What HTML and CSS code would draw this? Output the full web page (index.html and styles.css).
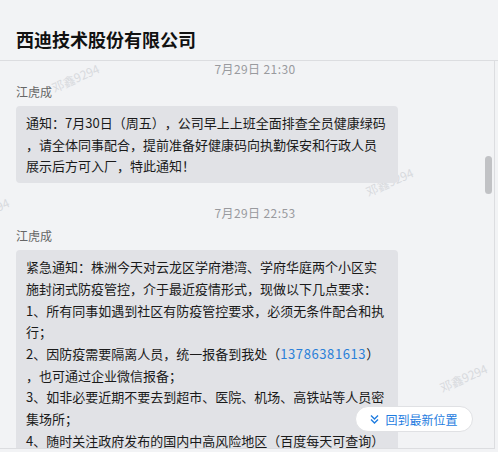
FILE: index.html
```html
<!DOCTYPE html>
<html lang="zh-CN">
<head>
    <meta charset="UTF-8">
    <meta name="viewport" content="width=device-width, initial-scale=1.0">
    <title>西迪技术股份有限公司</title>
    <link rel="stylesheet" href="styles.css">
</head>
<body>
    <div class="header">
        <h1>西迪技术股份有限公司</h1>
    </div>

    <div class="chat">
        <span class="watermark wm1">邓鑫9294</span>
        <span class="watermark wm2">邓鑫9294</span>
        <span class="watermark wm3">邓鑫9294</span>
        <span class="watermark wm4">邓鑫9294</span>

        <div class="msg">
            <div class="time">7月29日 21:30</div>
            <div class="name">江虎成</div>
            <div class="bubble">通知：7月30日（周五），公司早上上班全面排查全员健康绿码，请全体同事配合，提前准备好健康码向执勤保安和行政人员展示后方可入厂，特此通知！</div>
        </div>

        <div class="msg">
            <div class="time">7月29日 22:53</div>
            <div class="name">江虎成</div>
            <div class="bubble">紧急通知：株洲今天对云龙区学府港湾、学府华庭两个小区实施封闭式防疫管控，介于最近疫情形式，现做以下几点要求：<br>1、所有同事如遇到社区有防疫管控要求，必须无条件配合和执行；<br>2、因防疫需要隔离人员，统一报备到我处（<a href="tel:13786381613">13786381613</a>），也可通过企业微信报备；<br>3、如非必要近期不要去到超市、医院、机场、高铁站等人员密集场所；<br>4、随时关注政府发布的国内中高风险地区（百度每天可查询），如有途经或接触请及时报备。</div>
        </div>

        <div class="scroll-thumb"></div>

        <button class="to-latest">
            <svg width="9" height="10" viewBox="0 0 9 10">
                <path d="M1 1.5 L4.5 5 L8 1.5 M1 5.5 L4.5 9 L8 5.5" fill="none" stroke="#1e7ce0" stroke-width="1.4"/>
            </svg>
            回到最新位置
        </button>
    </div>
</body>
</html>
```

FILE: styles.css
```css
body {
    font-family: "Noto Sans CJK SC", "Noto Sans", sans-serif;
    background-color: #f2f3f5;
    margin: 0;
    padding: 0;
    color: #1a1a1a;
}
.header {
    height: 61px;
    border-bottom: 1px solid #dcdde0;
    padding: 27px 16px 0;
    box-sizing: border-box;
}
.header h1 {
    margin: 0;
    font-size: 18px;
    line-height: 24px;
    font-weight: bold;
    color: #111;
}
.chat {
    position: relative;
    width: 495px;
    height: 388px;
    overflow: hidden;
    border-right: 1px solid #dcdde0;
    border-bottom: 1px solid #dcdde0;
    box-sizing: border-box;
    padding: 0 16px;
}
.msg {
    margin-bottom: 22px;
}
.time {
    text-align: center;
    font-size: 12px;
    line-height: 16px;
    letter-spacing: 0.4px;
    color: #999a9e;
    margin-right: -16px;
}
.name {
    margin-top: 6px;
    font-size: 12px;
    line-height: 18px;
    color: #666;
}
.bubble {
    position: relative;
    z-index: 1;
    margin-top: 5px;
    width: 362px;
    padding: 6px 10px;
    background-color: #e1e2e6;
    border-radius: 4px;
    font-size: 13px;
    line-height: 21.7px;
    line-break: anywhere;
    text-spacing-trim: space-all;
}
.bubble a {
    color: #2a7fd8;
    text-decoration: none;
    letter-spacing: 0.6px;
}
.watermark {
    position: absolute;
    font-size: 12px;
    color: #d8dade;
    transform: rotate(-24deg);
    white-space: nowrap;
}
.wm1 { left: 50px; top: 8px; }
.wm2 { left: 364px; top: 112px; }
.wm3 { left: -40px; top: 142px; }
.wm4 { left: 438px; top: 308px; }
.scroll-thumb {
    position: absolute;
    right: 2px;
    top: 95px;
    width: 7px;
    height: 38px;
    border-radius: 4px;
    background-color: #c1c2c5;
}
.to-latest {
    position: absolute;
    left: 355px;
    top: 345px;
    z-index: 2;
    width: 118px;
    height: 26px;
    display: flex;
    align-items: center;
    justify-content: center;
    gap: 6px;
    background-color: #fff;
    border: 1px solid #e0e1e4;
    border-radius: 13px;
    font-family: inherit;
    font-size: 12px;
    color: #1e7ce0;
    padding: 0;
}
```
